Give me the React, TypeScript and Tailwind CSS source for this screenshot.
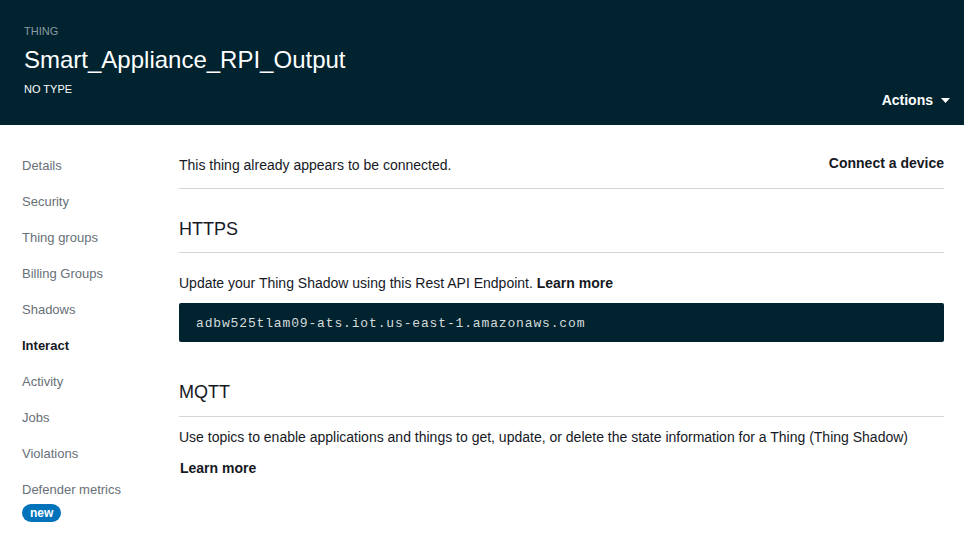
import React from "react";

const navItems = [
  "Details",
  "Security",
  "Thing groups",
  "Billing Groups",
  "Shadows",
  "Interact",
  "Activity",
  "Jobs",
  "Violations",
];

const App = () => {
  return (
    <div className="w-[964px] h-[550px] bg-white font-['Liberation_Sans',Arial,sans-serif] overflow-hidden">
      <header className="h-[125px] bg-[#00232f] px-6 pt-[24px] flex justify-between">
        <div className="flex flex-col">
          <div className="text-[11px] leading-[14px] text-[#8c9ba1] uppercase">Thing</div>
          <h1 className="text-[24px] leading-[30px] text-white mt-[7px]">Smart_Appliance_RPI_Output</h1>
          <div className="text-[11px] leading-[14px] text-white mt-[7px]">NO TYPE</div>
        </div>
        <div className="flex items-end pb-[14px] -mr-[10px]">
          <button className="flex items-center gap-2 text-white text-[14px] font-bold">
            Actions
            <svg width="9" height="5" viewBox="0 0 9 5">
              <path d="M0 0h9L4.5 5z" fill="#fff" />
            </svg>
          </button>
        </div>
      </header>

      <div className="flex">
        <nav className="w-[179px] shrink-0 pl-[22px] mt-[33px] flex flex-col">
          {navItems.map((item) => (
            <div
              key={item}
              className={
                item === "Interact"
                  ? "h-[36px] text-[13px] leading-[16px] font-bold text-[#16191f]"
                  : "h-[36px] text-[13px] leading-[16px] text-[#687078]"
              }
            >
              {item}
            </div>
          ))}
          <div className="text-[13px] leading-[16px] text-[#687078]">Defender metrics</div>
          <span className="mt-[6px] w-fit rounded-full bg-[#0073bb] px-[8px] py-[1px] text-[12px] leading-[16px] font-bold text-white">
            new
          </span>
        </nav>

        <main className="flex-1 pr-[20px] pt-[32px]">
          <div className="flex justify-between items-start pb-[15px] border-b border-[#d5d5d5]">
            <p className="text-[14px] leading-[16px] text-[#16191f]">This thing already appears to be connected.</p>
            <button className="text-[14px] leading-[16px] font-bold text-[#16191f] -mt-[2px]">Connect a device</button>
          </div>

          <h2 className="mt-[29px] pb-[12px] text-[18px] leading-[22px] text-[#16191f] border-b border-[#d5d5d5]">HTTPS</h2>
          <p className="mt-[21px] text-[14px] leading-[18px] text-[#16191f]">
            Update your Thing Shadow using this Rest API Endpoint. <span className="font-bold">Learn more</span>
          </p>
          <div className="mt-[11px] h-[39px] rounded-[2px] bg-[#00232f] px-[17px] pt-[3px] flex items-center font-['Liberation_Mono',monospace] text-[13px] tracking-[0.85px] text-[#d5dbdb]">
            adbw525tlam09-ats.iot.us-east-1.amazonaws.com
          </div>

          <h2 className="mt-[39px] pb-[13px] text-[18px] leading-[22px] text-[#16191f] border-b border-[#d5d5d5]">MQTT</h2>
          <p className="mt-[11px] text-[14px] leading-[18px] text-[#16191f]">
            Use topics to enable applications and things to get, update, or delete the state information for a Thing (Thing Shadow)
          </p>
          <p className="mt-[13px] pl-px text-[14px] leading-[18px] font-bold text-[#16191f]">Learn more</p>
        </main>
      </div>
    </div>
  );
};

export default App;
